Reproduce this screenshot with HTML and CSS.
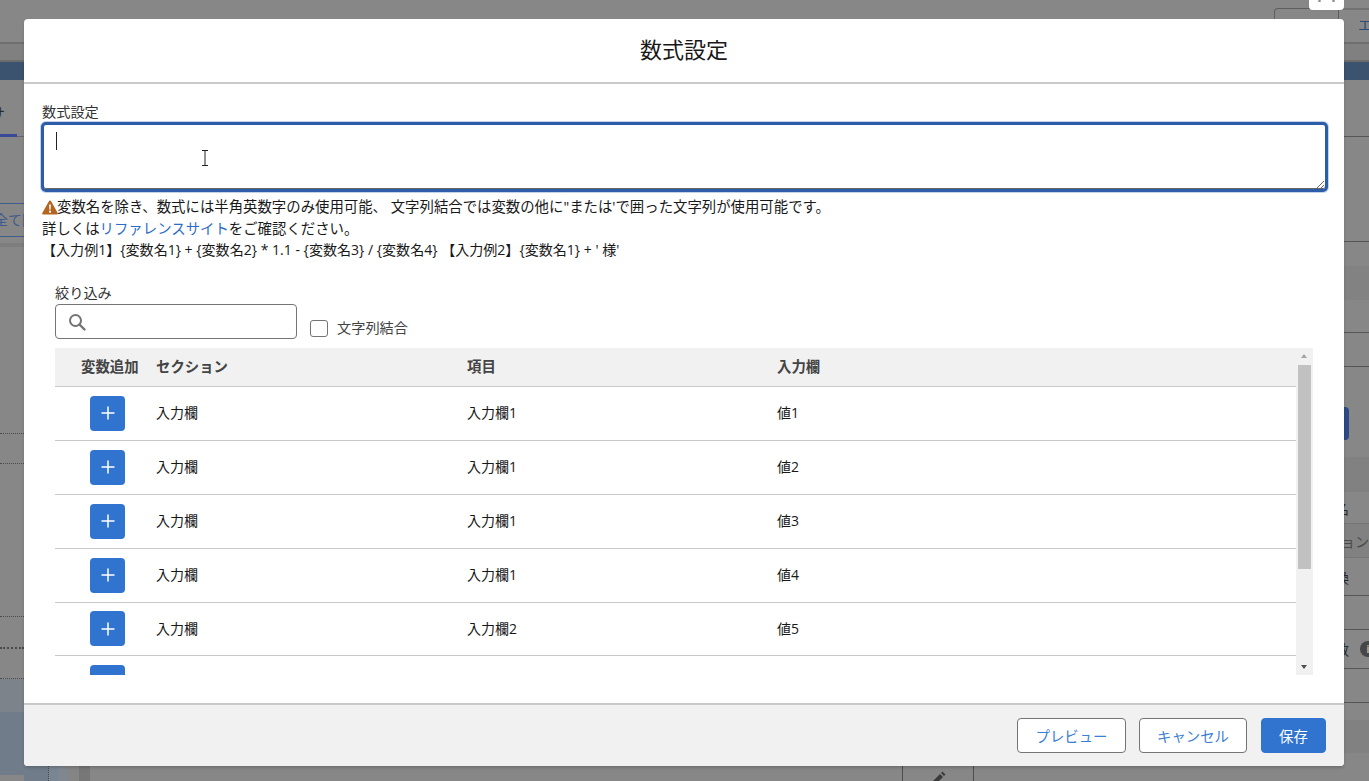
FILE: index.html
```html
<!DOCTYPE html>
<html lang="ja">
<head>
<meta charset="utf-8">
<title>数式設定</title>
<link rel="stylesheet" href="styles.css">
</head>
<body>
<div class="page">
  <header class="topbar">
    <div class="topbar-tools">
      <span class="tool-chip"><i></i><i></i></span>
      <span class="tool-button"></span>
      <span class="tool-tab">エ</span>
    </div>
    <div class="topbar-sub"></div>
    <div class="topbar-band"></div>
  </header>
  <div class="behind">
    <aside class="side-left">
      <div class="tab-cut"><span>サ</span></div>
      <div class="tab-line"><b></b></div>
      <div class="close-all"><span>全て閉</span></div>
      <div class="left-shadow"></div>
      <div class="dot dot-a"></div>
      <div class="dot dot-b"></div>
      <div class="dot dot-c"></div>
      <div class="dot dot-d dot-thick"></div>
      <div class="dot dot-e"></div>
      <div class="tint tint-a"></div>
      <div class="tint tint-b dot-f"></div>
    </aside>
    <div class="bottom-strip">
      <div class="strip-a"></div>
      <div class="strip-b"></div>
      <div class="strip-c"></div>
      <div class="strip-d"></div>
      <div class="strip-e"></div>
      <div class="strip-f"></div>
      <div class="strip-cell">
        <svg class="pencil" viewBox="0 0 16 16" width="16" height="16"><path d="M1 15l1-4 8-8 3 3-8 8zM11 2l1.500-1.500 3 3L14 5z" fill="#3a3a3a"/></svg>
      </div>
    </div>
    <aside class="side-right">
      <div class="r r1"></div>
      <div class="r r2"></div>
      <div class="r r3"></div>
      <div class="r r4 band"></div>
      <div class="r r5"></div>
      <div class="r r6"></div>
      <div class="r r7"></div>
      <div class="r r8"><span class="edge-button"></span></div>
      <div class="r r9"></div>
      <div class="r r10 band"></div>
      <div class="r r11 cut-text"><span>名</span></div>
      <div class="r r12 band cut-text"><span class="muted">ション</span></div>
      <div class="r r13 cut-text"><span>換</span></div>
      <div class="r r14"></div>
      <div class="r r15 cut-text"><span>数</span><em class="info">i</em></div>
      <div class="r r16"></div>
      <div class="r r17"></div>
      <div class="r r18 band"></div>
    </aside>
  </div>
</div>

<section class="modal">
  <h1 class="modal-title">数式設定</h1>
  <div class="modal-body">
    <label class="field-label">数式設定</label>
    <div class="editor">
      <textarea class="formula"></textarea>
      <span class="caret"></span>
      <svg class="ibeam" viewBox="0 0 8 16" width="8" height="16"><path d="M1 .5h6M1 15.500h6M4 .5v15" fill="none" stroke="#222" stroke-width="1"/></svg>
    </div>
    <div class="notes">
      <p><svg class="warn" viewBox="0 0 16 15" width="16" height="15"><path d="M8 .5c.5 0 .9.3 1.100.7l6.600 11.800c.4.700-.1 1.500-.9 1.500H1.200c-.8 0-1.300-.8-.9-1.500L6.900 1.200C7.100.8 7.500.5 8 .5z" fill="#b4651f"/><path d="M7.100 4.500h1.800l-.3 5.300H7.400zM8 10.600a1.100 1.100 0 1 1 0 2.200 1.100 1.100 0 0 1 0-2.200z" fill="#fff"/></svg>変数名を除き、数式には半角英数字のみ使用可能、 文字列結合では変数の他に"または'で囲った文字列が使用可能です。</p>
      <p>詳しくは<a class="link">リファレンスサイト</a>をご確認ください。</p>
      <p class="examples">【入力例1】{変数名1} + {変数名2} * 1.1 - {変数名3} / {変数名4} 【入力例2】{変数名1} + ' 様'</p>
    </div>
    <div class="filter">
      <label class="field-label filter-label">絞り込み</label>
      <div class="filter-row">
        <div class="search">
          <svg viewBox="0 0 18 18" width="18" height="18"><circle cx="7.500" cy="7.500" r="5.500" fill="none" stroke="#747474" stroke-width="2"/><path d="M11.500 11.500l5 5" stroke="#747474" stroke-width="2.400" stroke-linecap="round"/></svg>
        </div>
        <span class="check"></span>
        <span class="check-label">文字列結合</span>
      </div>
      <div class="table-wrap">
        <table class="vars">
          <thead>
            <tr><th class="c-add">変数追加</th><th class="c-sec">セクション</th><th class="c-item">項目</th><th>入力欄</th></tr>
          </thead>
          <tbody>
            <tr><td class="c-btn"><span class="plus"><svg viewBox="0 0 14 14" width="14" height="14"><path d="M7 .5v13M.5 7h13" stroke="#fff" stroke-width="1.500"/></svg></span></td><td>入力欄</td><td>入力欄1</td><td>値1</td></tr>
            <tr><td class="c-btn"><span class="plus"><svg viewBox="0 0 14 14" width="14" height="14"><path d="M7 .5v13M.5 7h13" stroke="#fff" stroke-width="1.500"/></svg></span></td><td>入力欄</td><td>入力欄1</td><td>値2</td></tr>
            <tr><td class="c-btn"><span class="plus"><svg viewBox="0 0 14 14" width="14" height="14"><path d="M7 .5v13M.5 7h13" stroke="#fff" stroke-width="1.500"/></svg></span></td><td>入力欄</td><td>入力欄1</td><td>値3</td></tr>
            <tr><td class="c-btn"><span class="plus"><svg viewBox="0 0 14 14" width="14" height="14"><path d="M7 .5v13M.5 7h13" stroke="#fff" stroke-width="1.500"/></svg></span></td><td>入力欄</td><td>入力欄1</td><td>値4</td></tr>
            <tr class="short"><td class="c-btn"><span class="plus"><svg viewBox="0 0 14 14" width="14" height="14"><path d="M7 .5v13M.5 7h13" stroke="#fff" stroke-width="1.500"/></svg></span></td><td>入力欄</td><td>入力欄2</td><td>値5</td></tr>
            <tr><td class="c-btn"><span class="plus"></span></td><td></td><td></td><td></td></tr>
          </tbody>
        </table>
        <div class="scrollbar">
          <span class="arrow arrow-up"></span>
          <span class="thumb"></span>
          <span class="arrow arrow-down"></span>
        </div>
      </div>
    </div>
  </div>
  <footer class="modal-footer">
    <button class="btn">プレビュー</button>
    <button class="btn btn-cancel">キャンセル</button>
    <button class="btn btn-save">保存</button>
  </footer>
</section>
</body>
</html>
```
FILE: styles.css
```css
* { box-sizing: border-box; }
html, body { margin: 0; height: 100%; overflow: hidden; }
body {
  font-family: "Open Sans", "Noto Sans CJK JP", sans-serif;
  font-size: 14px;
  color: #181818;
  background: #878787;
}

/* dimmed page behind the dialog */
.page { height: 781px; display: flex; flex-direction: column; overflow: hidden; }
.topbar { height: 80px; flex: none; }
.topbar-tools {
  height: 42px;
  position: relative;
  display: flex;
  justify-content: flex-end;
  padding-top: 8px;
}
.tool-chip {
  position: absolute;
  top: 0;
  right: 25px;
  width: 35px;
  height: 10px;
  background: #fff;
  border-radius: 0 0 4px 4px;
  display: flex;
  justify-content: center;
  gap: 11px;
}
.tool-chip i { width: 3px; height: 2px; background: #8a8a8a; border-radius: 50%; }
.tool-button {
  width: 65px;
  height: 34px;
  border: 1px solid #5e5e5e;
  border-bottom: 0;
  border-radius: 4px 0 0 0;
}
.tool-tab {
  width: 30px;
  height: 34px;
  border-top: 2px solid #727272;
  padding: 5px 0 0 19px;
  font-size: 14px;
  line-height: 20px;
  color: #2f4a78;
  white-space: nowrap;
  overflow: hidden;
}
.topbar-sub { height: 20px; background: #808080; border-top: 2px solid #6f6f6f; border-bottom: 2px solid #6c6c6c; }
.topbar-band { height: 18px; background: #3b536f; }

.behind { flex: 1; display: grid; grid-template-columns: 24px 1fr 25px; grid-template-rows: 1fr; }
.side-left, .side-right { overflow: hidden; }

.tab-cut { height: 54px; padding-top: 22px; overflow: hidden; white-space: nowrap; }
.tab-cut span { display: block; margin-left: -10px; line-height: 22px; font-size: 15px; color: #2b2b2b; }
.tab-line { height: 3px; border-bottom: 1px solid #666; }
.tab-line b { display: block; width: 17px; height: 3px; background: #3a4a9a; }
.close-all {
  margin-top: 66px;
  height: 34px;
  border-top: 1px solid #3f5a8c;
  border-bottom: 1px solid #3f5a8c;
  overflow: hidden;
  white-space: nowrap;
}
.close-all span { display: block; margin-left: -6px; font-size: 14px; line-height: 32px; color: #3f5a8c; }
.left-shadow { height: 4px; margin-top: 6px; background: #7e7e7e; }
.dot { border-bottom: 1px dotted #4b4b4b; }
.dot-a { height: 187px; }
.dot-b { height: 30px; }
.dot-c { height: 153px; }
.dot-d { height: 32px; }
.dot-thick { border-bottom: 2px dotted #4b4b4b; }
.dot-e { height: 30px; }
.tint-a { height: 33px; background: #7c838a; }
.tint-b { height: 63px; background: #717c8b; }
.dot-f { border-bottom: 0; }

.bottom-strip { align-self: end; height: 15px; display: flex; }
.strip-a { width: 25px; background: #717c8b; border-right: 1px dotted #4b4b4b; }
.strip-b { width: 9px; background: #7a8592; }
.strip-c { width: 9px; background: #7f8890; }
.strip-d { width: 12px; background: #858585; }
.strip-e { width: 11px; background: #777; }
.strip-f { width: 813px; border-right: 1px solid #4d4d4d; }
.strip-cell { width: 71px; border-right: 1px solid #4d4d4d; display: flex; justify-content: center; padding-top: 5px; overflow: hidden; }
.pencil { flex: none; }

.r { border-bottom: 1px solid #565656; overflow: hidden; white-space: nowrap; }
.band { background: #818181; border-bottom-color: #757575; }
.r1 { height: 57px; }
.r2 { height: 105px; }
.r3 { height: 24px; border-bottom: 0; }
.r4 { height: 34px; border-bottom: 0; background: #828282; }
.r5 { height: 33px; }
.r6 { height: 34px; }
.r7 { height: 40px; border-bottom: 0; }
.r8 { height: 33px; border-bottom: 0; }
.r9 { height: 17px; border-bottom: 0; }
.r10 { height: 35px; border-bottom: 0; }
.r11 { height: 32px; border-bottom-color: #757575; }
.r12 { height: 34px; }
.r13 { height: 38px; }
.r14 { height: 34px; }
.r15 { height: 39px; }
.r16 { height: 34px; }
.r17 { height: 17px; border-bottom: 0; }
.r18 { height: 33px; border-bottom: 0; }
.edge-button { display: block; width: 5px; height: 33px; background: #2d4a85; border-radius: 0 4px 4px 0; }
.cut-text { display: flex; align-items: center; font-size: 14px; color: #2b2b2b; }
.cut-text span { margin-left: -9px; flex: none; }
.cut-text .muted { margin-left: -17px; color: #4a4a4a; font-size: 14px; }
.info {
  flex: none;
  margin-left: 11px;
  width: 16px;
  height: 16px;
  border-radius: 50%;
  background: #474747;
  color: #aaa;
  font-size: 11px;
  line-height: 16px;
  text-align: center;
  font-style: normal;
  font-weight: 700;
}

/* dialog */
.modal {
  position: absolute;
  left: 24px;
  top: 19px;
  width: 1320px;
  height: 747px;
  background: #fff;
  border-radius: 4px;
  box-shadow: 0 2px 3px rgba(0, 0, 0, .16);
  display: flex;
  flex-direction: column;
  overflow: hidden;
}
.modal-title {
  margin: 0;
  height: 65px;
  flex: none;
  border-bottom: 2px solid #c9c9c9;
  text-align: center;
  font-size: 22px;
  font-weight: 400;
  line-height: 61px;
}
.modal-body { flex: 1; padding-top: 20px; min-height: 0; }
.field-label { display: block; padding-left: 18px; height: 18px; line-height: 15px; font-size: 14.200px; color: #333; }
.editor { position: relative; margin: 0 16px 0 17px; height: 70px; }
.formula {
  display: block;
  width: 100%;
  height: 70px;
  margin: 0;
  border: 3px solid #2d5da9;
  border-radius: 5px;
  outline: 0;
  box-shadow: inset 0 -1px 0 #666, 0 0 0 1px #c3d2e9;
  background: #fff;
}
.caret { position: absolute; left: 15px; top: 10px; width: 1px; height: 18px; background: #222; }
.ibeam { position: absolute; left: 160px; top: 28px; }
.notes { margin-top: 5px; padding-left: 18px; }
.notes p { margin: 0; height: 21.500px; line-height: 20px; font-size: 14.400px; white-space: pre-wrap; }
.notes .examples { font-size: 14.050px; }
.warn { vertical-align: -3px; margin-right: -1px; }
.link { color: #2d6cc4; }
.filter { margin-top: 22px; padding-left: 31px; }
.filter-label { padding-left: 0; height: 20px; line-height: 17px; }
.filter-row { display: flex; align-items: flex-end; height: 35px; }
.search {
  width: 242px;
  height: 35px;
  border: 1px solid #747474;
  border-radius: 4px;
  background: #fff;
  padding: 8px 0 0 12px;
}
.search svg { display: block; }
.check {
  width: 18px;
  height: 17px;
  margin: 0 9px 2px 13px;
  border: 1px solid #747474;
  border-radius: 3px;
  background: #fff;
}
.check-label { font-size: 14.200px; line-height: 20px; margin-bottom: 1px; color: #444; }
.table-wrap { margin-top: 9px; width: 1258px; height: 327px; display: flex; overflow: hidden; }
.vars {
  width: 1241px;
  flex: none;
  height: max-content;
  table-layout: fixed;
  border-collapse: separate;
  border-spacing: 0;
}
.vars th {
  height: 39px;
  padding: 0 0 2px;
  background: #f1f1f1;
  border-bottom: 1px solid #c9c9c9;
  font-size: 14.400px;
  font-weight: 700;
  color: #444;
  text-align: left;
}
.vars th.c-add { width: 101px; padding-left: 26px; }
.vars th.c-sec { width: 311px; }
.vars th.c-item { width: 310px; }
.vars td {
  height: 54px;
  padding: 0 0 2px;
  border-bottom: 1px solid #c9c9c9;
  font-size: 14px;
  vertical-align: middle;
}
.vars tr.short td { height: 53px; }
.vars td.c-btn { padding: 0 0 0 35px; }
.plus {
  display: flex;
  width: 35px;
  height: 35px;
  background: #3174d0;
  border-radius: 4px;
  align-items: center;
  justify-content: center;
}
.scrollbar { width: 17px; flex: none; background: #f1f1f1; position: relative; display: flex; flex-direction: column; align-items: center; }
.thumb { width: 13px; height: 204px; margin-top: 17px; background: #c1c1c1; }
.arrow { position: absolute; left: 5px; width: 0; height: 0; border-left: 3.500px solid transparent; border-right: 3.500px solid transparent; }
.arrow-up { top: 6px; border-bottom: 4px solid #a3a3a3; }
.arrow-down { bottom: 6px; border-top: 4px solid #505050; }

.modal-footer {
  height: 63px;
  flex: none;
  background: #f1f1f1;
  border-top: 2px solid #c9c9c9;
  display: flex;
  justify-content: flex-end;
  align-items: flex-start;
  gap: 13px;
  padding: 13px 18px 0 0;
}
.btn {
  height: 35px;
  width: 109px;
  padding: 0;
  background: #fff;
  border: 1px solid #747474;
  border-radius: 4px;
  font: inherit;
  font-size: 14.400px;
  color: #3b7fd4;
}
.btn-cancel { width: 108px; margin-right: 1px; }
.btn-save { width: 65px; background: #3174d0; border-color: #3174d0; color: #fff; }
```
